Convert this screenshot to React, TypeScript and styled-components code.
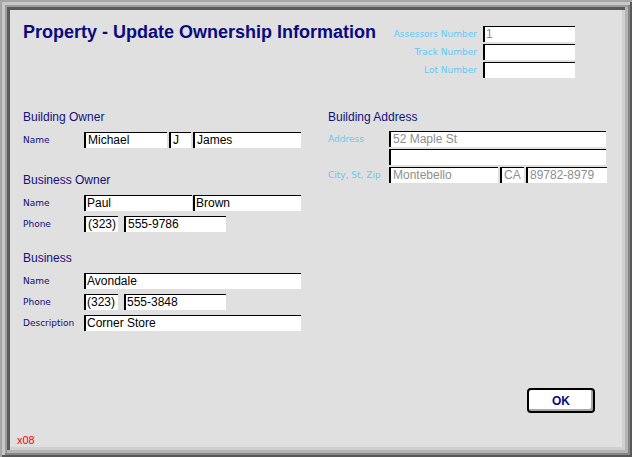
import React from "react";
import styled, { createGlobalStyle } from "styled-components";

const GlobalStyle = createGlobalStyle`
  html, body {
    margin: 0;
    padding: 0;
    background: #e0e0e0;
  }
  * {
    box-sizing: border-box;
  }
`;

const Frame = styled.div`
  width: 632px;
  height: 457px;
  padding: 10px;
  background: #e0e0e0;
  box-shadow:
    inset 2px 2px 0 #a6a6a6,
    inset -2px -2px 0 #585858,
    inset 5px 5px 0 #c8c8c8,
    inset -4px -4px 0 #868686,
    inset 7px 7px 0 #9c9c9c,
    inset -7px -7px 0 #b4b4b4,
    inset 10px 10px 0 #5a5a5a,
    inset -10px -10px 0 #d0d0d0;
  font-family: "Liberation Sans", Arial, sans-serif;
`;

const Content = styled.div`
  height: 100%;
  display: flex;
  flex-direction: column;
  padding-left: 13px;
`;

const Header = styled.div`
  display: flex;
  justify-content: space-between;
  align-items: flex-start;
  padding-right: 47px;
`;

const Title = styled.h1`
  margin: 11px 0 0;
  font-size: 18px;
  line-height: 22px;
  font-weight: bold;
  color: #0a0a7e;
`;

const ParcelGrid = styled.div`
  margin-top: 16px;
  display: grid;
  grid-template-columns: auto 92px;
  column-gap: 6px;
  row-gap: 2px;
  align-items: center;
`;

const Label = styled.span<{ $light?: boolean; $w?: number }>`
  font-family: "DejaVu Sans", Verdana, sans-serif;
  font-size: 9px;
  line-height: 11px;
  color: ${(p) => (p.$light ? "#66c8f5" : "#0c0c7a")};
  ${(p) => (p.$w ? `width: ${p.$w}px; flex: none;` : "text-align: right;")}
`;

const Field = styled.div<{ $w: number; $dim?: boolean; $indent?: number }>`
  width: ${(p) => p.$w}px;
  height: 16px;
  flex: none;
  background: #fff;
  border-top: 1px solid #000;
  border-left: 2px solid #000;
  padding-left: ${(p) => p.$indent ?? 1}px;
  font-size: 12px;
  line-height: 15px;
  white-space: nowrap;
  overflow: hidden;
  color: ${(p) => (p.$dim ? "#8e8e8e" : "#000")};
`;

const Body = styled.div`
  margin-top: 32px;
  display: flex;
  gap: 27px;
`;

const Column = styled.div`
  width: 278px;
  display: flex;
  flex-direction: column;
`;

const Section = styled.div<{ $top?: number }>`
  margin-top: ${(p) => p.$top ?? 0}px;
  display: flex;
  flex-direction: column;
`;

const SectionTitle = styled.h2<{ $after?: number }>`
  margin: 0 0 ${(p) => p.$after ?? 8}px;
  font-size: 12px;
  line-height: 14px;
  font-weight: normal;
  color: #10107e;
`;

const Rows = styled.div<{ $gap: number }>`
  display: flex;
  flex-direction: column;
  gap: ${(p) => p.$gap}px;
`;

const Row = styled.div`
  display: flex;
  align-items: center;
`;

const Fields = styled.div<{ $gap?: number }>`
  display: flex;
  gap: ${(p) => p.$gap ?? 2}px;
`;

const Footer = styled.div`
  margin-top: auto;
  display: flex;
  justify-content: space-between;
  align-items: flex-end;
`;

const Code = styled.span`
  margin-left: -6px;
  font-size: 11px;
  line-height: 13px;
  color: #f00;
`;

const OkButton = styled.button`
  width: 68px;
  height: 25px;
  margin: 0 27px 34px 0;
  padding: 0;
  background: #fff;
  border: 2px solid #000;
  border-radius: 4px;
  box-shadow: inset -2px -2px 0 #a8a8a8;
  font-family: "Liberation Sans", Arial, sans-serif;
  font-size: 12px;
  font-weight: bold;
  color: #0a0a7e;
`;

export default function App() {
  return (
    <>
      <GlobalStyle />
      <Frame>
        <Content>
          <Header>
            <Title>Property - Update Ownership Information</Title>
            <ParcelGrid>
              <Label $light>Assessors Number</Label>
              <Field $w={92} $dim>1</Field>
              <Label $light>Track Number</Label>
              <Field $w={92} />
              <Label $light>Lot Number</Label>
              <Field $w={92} />
            </ParcelGrid>
          </Header>

          <Body>
            <Column>
              <Section>
                <SectionTitle>Building Owner</SectionTitle>
                <Row>
                  <Label $w={61}>Name</Label>
                  <Fields>
                    <Field $w={83} $indent={2}>Michael</Field>
                    <Field $w={22} $indent={2}>J</Field>
                    <Field $w={108} $indent={2}>James</Field>
                  </Fields>
                </Row>
              </Section>

              <Section $top={25}>
                <SectionTitle>Business Owner</SectionTitle>
                <Rows $gap={5}>
                  <Row>
                    <Label $w={61}>Name</Label>
                    <Fields $gap={1}>
                      <Field $w={108}>Paul</Field>
                      <Field $w={108}>Brown</Field>
                    </Fields>
                  </Row>
                  <Row>
                    <Label $w={61}>Phone</Label>
                    <Fields $gap={6}>
                      <Field $w={34} $indent={2}>(323)</Field>
                      <Field $w={102} $indent={2}>555-9786</Field>
                    </Fields>
                  </Row>
                </Rows>
              </Section>

              <Section $top={19}>
                <SectionTitle>Business</SectionTitle>
                <Rows $gap={5}>
                  <Row>
                    <Label $w={61}>Name</Label>
                    <Field $w={217}>Avondale</Field>
                  </Row>
                  <Row>
                    <Label $w={61}>Phone</Label>
                    <Fields $gap={6}>
                      <Field $w={34}>(323)</Field>
                      <Field $w={102}>555-3848</Field>
                    </Fields>
                  </Row>
                  <Row>
                    <Label $w={61}>Description</Label>
                    <Field $w={217}>Corner Store</Field>
                  </Row>
                </Rows>
              </Section>
            </Column>

            <Column>
              <Section>
                <SectionTitle $after={7}>Building Address</SectionTitle>
                <Rows $gap={2}>
                  <Row>
                    <Label $light $w={61}>Address</Label>
                    <Field $w={217} $dim $indent={2}>52 Maple St</Field>
                  </Row>
                  <Row>
                    <Label $w={61} />
                    <Field $w={217} />
                  </Row>
                  <Row>
                    <Label $light $w={61}>City, St, Zip</Label>
                    <Fields>
                      <Field $w={109} $dim $indent={2}>Montebello</Field>
                      <Field $w={24} $dim $indent={2}>CA</Field>
                      <Field $w={81} $dim $indent={2}>89782-8979</Field>
                    </Fields>
                  </Row>
                </Rows>
              </Section>
            </Column>
          </Body>

          <Footer>
            <Code>x08</Code>
            <OkButton type="button">OK</OkButton>
          </Footer>
        </Content>
      </Frame>
    </>
  );
}
